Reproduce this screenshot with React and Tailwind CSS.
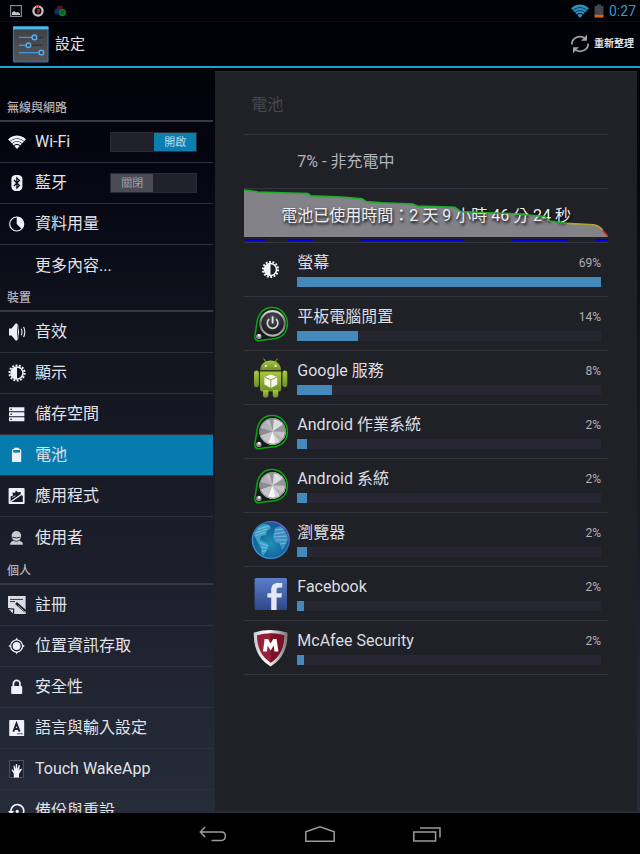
import React, { useState } from 'react';

// Small white icons for the settings list, all on an 18x18 grid
const ListIcon = ({ children }) => (
  <svg viewBox="0 0 18 18" className="w-[18px] h-[18px] shrink-0 text-[#f0f0fa]" fill="currentColor" aria-hidden="true">
    {children}
  </svg>
);

const WifiArcs = ({ id }) => (
  <>
    <clipPath id={id}>
      <path d="M9 16 L0 6.2 Q9 -2 18 6.2 Z" />
    </clipPath>
    <g clipPath={`url(#${id})`}>
      <circle cx="9" cy="15.4" r="3.4" />
      <circle cx="9" cy="15.4" r="5.6" fill="none" stroke="currentColor" strokeWidth="2.3" />
      <circle cx="9" cy="15.4" r="8.5" fill="none" stroke="currentColor" strokeWidth="2.5" />
      <circle cx="9" cy="15.4" r="11.5" fill="none" stroke="currentColor" strokeWidth="2.6" />
    </g>
  </>
);

const WifiIcon = () => (
  <ListIcon>
    <WifiArcs id="wifi-list" />
  </ListIcon>
);

const BluetoothIcon = () => (
  <ListIcon>
    <rect x="3.4" y="1" width="11" height="16" rx="4.2" />
    <path d="M6 6 L11.4 11.6 L8.9 14 V4 L11.4 6.4 L6 12" fill="none" stroke="#0a0b14" strokeWidth="1.3" />
  </ListIcon>
);

const DataUsageIcon = () => (
  <ListIcon>
    <circle cx="8.7" cy="9" r="7" fill="none" stroke="currentColor" strokeWidth="1.2" />
    <path d="M8.7 9 V1.8 A7.2 7.2 0 0 1 13.8 14.1 Z" />
  </ListIcon>
);

const SoundIcon = () => (
  <ListIcon>
    <path d="M1 5.4 H3.6 L7.6 0.4 H9.2 V17.6 H7.6 L3.6 12.6 H1 Z" />
    <path d="M9.6 1.2 Q11.6 9 9.6 16.8" fill="none" stroke="currentColor" strokeWidth="0.8" />
    <path d="M10 7.2 Q12.2 9 10 11 Z" />
    <path d="M13.2 5.8 Q14.8 9 13.2 12.2 M15.6 4 Q18 9 15.6 14" fill="none" stroke="currentColor" strokeWidth="1.1" />
  </ListIcon>
);

const DisplayShape = ({ hole }) => (
  <>
    <circle cx="9" cy="9" r="6.8" />
    <circle cx="9" cy="9" r="7.6" fill="none" stroke="currentColor" strokeWidth="2" strokeDasharray="1.9 1.51" />
    <path d="M9 3.8 A5.2 5.2 0 0 1 9 14.2 Z" fill={hole} />
  </>
);

const DisplayIcon = () => (
  <ListIcon>
    <DisplayShape hole="#12131d" />
  </ListIcon>
);

const StorageIcon = () => (
  <ListIcon>
    {[2.2, 7.2, 12.2].map((y) => (
      <g key={y}>
        <rect x="1" y={y} width="15.4" height="4.1" rx="0.4" />
        <rect x="2.4" y={y + 1.5} width="1.5" height="1.2" fill="#14151f" />
      </g>
    ))}
  </ListIcon>
);

const BatteryIcon = () => (
  <ListIcon>
    <path d="M4 4.2 Q4 3.4 5 3.2 L6.2 2.8 V1.8 H11 V2.8 L12.2 3.2 Q13.2 3.4 13.2 4.2 V15.4 Q13.2 16 12.6 16 H4.6 Q4 16 4 15.4 Z" />
    <rect x="5.2" y="4" width="6.8" height="2.6" fill="#0b7fae" />
  </ListIcon>
);

const AppsIcon = () => (
  <ListIcon>
    <rect x="0.6" y="1" width="16" height="16" rx="0.8" />
    <path d="M2.6 15 V9.4 L5 8.4 L4.4 5.6 L6.8 6 L8 3.4 L10 5.2 L12.8 5 L12.6 7.4 L14.8 9 V15 Z" fill="#181a26" />
    <path d="M2.6 14.8 L14 7" stroke="currentColor" strokeWidth="1.3" />
    <path d="M4 10.4 L7.6 8.8" stroke="currentColor" strokeWidth="0.7" />
  </ListIcon>
);

const UserIcon = () => (
  <ListIcon>
    <g fill="#c9cad2">
      <ellipse cx="8.4" cy="7" rx="4.8" ry="5" />
      <path d="M5.6 11.4 Q8.4 13.8 11.2 11.4 L14 13 Q15 14 15 15.8 H2 Q2 14 3 13 Z" />
    </g>
    <path d="M4.4 8.2 Q8.4 9.6 12.4 8.2" stroke="#1a1c28" strokeWidth="0.9" fill="none" />
  </ListIcon>
);

const RegisterIcon = () => (
  <ListIcon>
    <path d="M0 0 H17.6 V18 H5.6 L0 12.6 Z" fill="#dcdce4" />
    <path d="M0 12.6 L5.6 13 L5.6 18" fill="none" stroke="#1c202b" strokeWidth="1.2" />
    <path d="M2 3.4 H15 M2 5.6 H7" stroke="#1c202b" strokeWidth="0.9" />
    <path d="M8 7 L17.4 15.4" stroke="#1c202b" strokeWidth="2.8" />
    <path d="M10.2 9.6 L17.4 16.4" stroke="#dcdce4" strokeWidth="0.7" />
  </ListIcon>
);

const LocationIcon = () => (
  <ListIcon>
    <circle cx="8.6" cy="9" r="6" fill="none" stroke="currentColor" strokeWidth="1.2" />
    <circle cx="8.6" cy="9" r="3.9" />
    <path d="M7.2 3 L8.6 0.8 L10 3 Z M7.2 15 L8.6 17.2 L10 15 Z M2.6 7.6 L0.4 9 L2.6 10.4 Z M14.6 7.6 L16.8 9 L14.6 10.4 Z" />
  </ListIcon>
);

const LockIcon = () => (
  <ListIcon>
    <rect x="3.2" y="8" width="11" height="8" rx="0.8" />
    <path d="M5.4 8 V5.6 A3.3 3.3 0 0 1 12 5.6 V8" fill="none" stroke="currentColor" strokeWidth="1.7" />
  </ListIcon>
);

const LanguageIcon = () => (
  <ListIcon>
    <rect x="1.2" y="1" width="15" height="16" rx="0.8" />
    <path d="M5.4 12.6 L8.5 4.4 L11.6 12.6 M6.4 10 H10.6" fill="none" stroke="#212532" strokeWidth="1.9" />
    <path d="M9.4 14.8 H14.8" stroke="#212532" strokeWidth="1" strokeDasharray="1.4 0.5" />
  </ListIcon>
);

const HandIcon = () => (
  <ListIcon>
    <rect x="1.8" y="0.4" width="13.4" height="17.2" fill="#1b1f2a" stroke="#666a76" strokeWidth="0.7" />
    <path d="M5.8 17.6 V13.8 L3.4 10 L4 9.2 L6 11 L5.4 5.8 L6.4 5.4 L7.6 9 L7.8 4 H9 L9.4 9 L10.8 4.8 L11.8 5.2 L11.2 10 L13.2 8.4 L14 9.2 L11 14 V17.6 Z" />
  </ListIcon>
);

const BackupIcon = () => (
  <ListIcon>
    <path d="M3 9.8 A6.4 6.4 0 1 1 6.4 14.6" fill="none" stroke="currentColor" strokeWidth="1.7" />
    <path d="M0 9 H6.2 L3 12.8 Z" />
    <circle cx="9.2" cy="9.4" r="1.6" />
  </ListIcon>
);

// Larger icons for the battery usage list, all on a 40x40 grid
const AppIcon = ({ children }) => (
  <svg viewBox="0 0 40 40" className="w-10 h-10 shrink-0" aria-hidden="true">
    {children}
  </svg>
);

const ScreenAppIcon = () => (
  <AppIcon>
    <g transform="translate(10.5 10.5)" fill="#f4f4fc" color="#f4f4fc">
      <DisplayShape hole="#202127" />
    </g>
  </AppIcon>
);

const TEARDROP = 'M5.6 21 C6.4 11 11.6 3.6 21 3.6 C30 3.6 36.4 11 36.4 19.6 C36.4 28 31.4 33 25 34.4 L8.6 36.6 Q3.2 37 3.9 32 Z';

const IdleAppIcon = () => (
  <AppIcon>
    <defs>
      <radialGradient id="idle-face" cx="0.5" cy="0.3" r="0.8">
        <stop offset="0" stopColor="#4b4c50" />
        <stop offset="1" stopColor="#0b0c0e" />
      </radialGradient>
      <linearGradient id="idle-rim" x1="0" y1="0" x2="0" y2="1">
        <stop offset="0" stopColor="#d8d8dc" />
        <stop offset="0.5" stopColor="#6b6c70" />
        <stop offset="1" stopColor="#b0b0b4" />
      </linearGradient>
    </defs>
    <path d={TEARDROP} fill="#17181b" stroke="#06a80c" strokeWidth="1.5" />
    <circle cx="21.6" cy="19.4" r="12.2" fill="url(#idle-face)" stroke="url(#idle-rim)" strokeWidth="2.2" />
    <path d="M18.2 15 A5.3 5.3 0 1 0 25 15" fill="none" stroke="#cfcfd4" strokeWidth="1.7" />
    <path d="M21.6 12.4 V19.6" stroke="#e6e6ea" strokeWidth="1.8" />
    <circle cx="7.8" cy="32.4" r="2.7" fill="#8d8e92" />
    <circle cx="8.2" cy="31.4" r="1.3" fill="#efeff2" />
  </AppIcon>
);

const KnobAppIcon = ({ id }) => (
  <AppIcon>
    <defs>
      <clipPath id={id}>
        <circle cx="21.6" cy="19.4" r="13.2" />
      </clipPath>
    </defs>
    <path d={TEARDROP} fill="#17181b" stroke="#06a80c" strokeWidth="1.5" />
    <g clipPath={`url(#${id})`}>
      <rect x="8" y="6" width="28" height="28" fill="#b2b2b6" />
      <path d="M21.6 19.4 L11 3 H30 Z" fill="#c2c2c6" />
      <path d="M21.6 19.4 L17 3 H23 Z" fill="#95959a" />
      <path d="M21.6 19.4 L24 3 H36 V9 Z" fill="#dcdce0" />
      <path d="M21.6 19.4 L37 10 V20 Z" fill="#96969a" />
      <path d="M21.6 19.4 L37 20 V30 Z" fill="#c4c4c8" />
      <path d="M21.6 19.4 L6 15 V25 Z" fill="#8c8c90" />
      <path d="M21.6 19.4 L6 25 V34 H15 Z" fill="#c6c6ca" />
      <path d="M21.6 19.4 L15 36 H26 Z" fill="#f6f6f8" />
      <path d="M21.6 19.4 L26 36 H33 Z" fill="#d6d6da" />
    </g>
    <circle cx="21.6" cy="19.4" r="12.8" fill="none" stroke="#808085" strokeWidth="0.8" />
    <circle cx="7.8" cy="32.4" r="2.7" fill="#8d8e92" />
    <circle cx="8.2" cy="31.4" r="1.3" fill="#efeff2" />
  </AppIcon>
);

const AndroidAppIcon = () => (
  <AppIcon>
    <defs>
      <linearGradient id="robot" x1="0" y1="0" x2="0" y2="1">
        <stop offset="0" stopColor="#a8c83c" />
        <stop offset="1" stopColor="#6f8e26" />
      </linearGradient>
    </defs>
    <path d="M12.6 0.6 L15.4 4.6 M26.4 0.6 L23.6 4.6" stroke="#8fae33" strokeWidth="1" />
    <g fill="url(#robot)">
      <path d="M9.2 12.2 C9.2 6.2 13.6 2.4 19.6 2.4 C25.6 2.4 30 6.2 30 12.2 Z" />
      <path d="M9 13.4 H30.2 V31 Q30.2 33.6 27.6 33.6 H11.6 Q9 33.6 9 31 Z" />
      <rect x="3" y="12.6" width="4.9" height="16.6" rx="2.4" />
      <rect x="31.4" y="12.6" width="4.9" height="16.6" rx="2.4" />
      <path d="M12 32 H17.4 V37 Q17.4 39.6 14.7 39.6 Q12 39.6 12 37 Z M21.8 32 H27.2 V37 Q27.2 39.6 24.5 39.6 Q21.8 39.6 21.8 37 Z" />
    </g>
    <circle cx="14.8" cy="8" r="1.1" fill="#fff" />
    <circle cx="24.6" cy="8" r="1.1" fill="#fff" />
    <path d="M19.8 16.4 L26.2 19 V26.6 L19.8 30 L13.4 26.6 V19 Z" fill="#f7f8ef" />
    <path d="M13.4 19 L19.8 21.8 L26.2 19 M19.8 21.8 V30" fill="none" stroke="#8fa746" strokeWidth="1" />
  </AppIcon>
);

const GlobeAppIcon = () => (
  <AppIcon>
    <defs>
      <radialGradient id="ocean" cx="0.5" cy="0.6" r="0.6">
        <stop offset="0" stopColor="#1f8fb8" />
        <stop offset="0.6" stopColor="#176a9e" />
        <stop offset="1" stopColor="#1b5592" />
      </radialGradient>
      <linearGradient id="globe-edge" x1="0" y1="1" x2="1" y2="0">
        <stop offset="0" stopColor="#3aa5dc" />
        <stop offset="0.65" stopColor="#2b72b8" />
        <stop offset="1" stopColor="#9a58e0" />
      </linearGradient>
    </defs>
    <circle cx="19.8" cy="20" r="18.4" fill="url(#ocean)" stroke="url(#globe-edge)" strokeWidth="1.4" />
    <path d="M3 15 Q5 7 13 4 L18 5 L20 8 L16 11 L15 15 L10 16 L9 20 L14 22 L18 25 L16 30 L12 36 Q10 33 10 28 L7 23 Z" fill="#3da2c8" />
    <path d="M24 8 L30 6 Q36 12 37 19 L34 26 L31 30 L29 24 L24 22 L22 17 Z" fill="#3f8fc6" />
    <path d="M4 13 L16 9 M4 16 L14 12 M7 9 L18 6 M9 23 L17 26 M10 27 L16 28 M11 31 L15 31 M24 10 L32 9 M23 14 L34 12 M23 17 L36 16 M25 20 L36 20 M29 24 L35 23" stroke="#8fcbe2" strokeWidth="0.7" />
  </AppIcon>
);

const FacebookAppIcon = () => (
  <AppIcon>
    <defs>
      <linearGradient id="fb" x1="0" y1="0" x2="0" y2="1">
        <stop offset="0" stopColor="#5b7ec8" />
        <stop offset="1" stopColor="#2e478a" />
      </linearGradient>
    </defs>
    <rect x="3.6" y="4" width="32.4" height="32" rx="1.6" fill="url(#fb)" />
    <path d="M20.2 36 V23.6 H16.4 V19.2 H20.2 V16 C20.2 11.4 22.6 9 27 9 H31.2 V13.6 H28.4 C26.2 13.6 25.6 14.6 25.6 16.4 V19.2 H31 L30.4 23.6 H25.6 V36 Z" fill="#e4e8f4" />
  </AppIcon>
);

const McAfeeAppIcon = () => (
  <AppIcon>
    <defs>
      <linearGradient id="shield" x1="0" y1="0" x2="1" y2="0">
        <stop offset="0" stopColor="#c9c9cd" />
        <stop offset="0.4" stopColor="#ffffff" />
        <stop offset="1" stopColor="#77777c" />
      </linearGradient>
    </defs>
    <path d="M2.8 4.6 Q19.6 -0.4 36.4 4.6 Q37 15 33 24 Q29 33 19.6 38.4 Q10.2 33 6.2 24 Q2.2 15 2.8 4.6 Z" fill="url(#shield)" />
    <path d="M6 7.2 Q19.6 3.4 33.2 7.2 Q33.4 15.4 30.2 22.6 Q27 30 19.6 34.8 Q12.2 30 9 22.6 Q5.8 15.4 6 7.2 Z" fill="#98203a" />
    <path d="M19.6 5.4 Q27 5.4 33.2 7.2 Q33.4 15.4 30.2 22.6 Q27 30 19.6 34.8 Z" fill="#7a1226" />
    <path d="M12 23.6 L13.6 11 H17 L19.6 15.4 L22.2 11 H25.6 L27.4 23.6 H23.4 L22.8 17.6 L19.6 22.4 L16.6 17.6 L16 23.6 Z" fill="#fff" />
  </AppIcon>
);

const sections = [
  {
    title: '無線與網路',
    className: 'h-[54px]',
    items: [
      { label: 'Wi-Fi', icon: <WifiIcon />, toggle: true, on: true },
      { label: '藍牙', icon: <BluetoothIcon />, toggle: true, on: false },
      { label: '資料用量', icon: <DataUsageIcon /> },
      { label: '更多內容...', icon: null },
    ],
  },
  {
    title: '裝置',
    className: 'h-[26px]',
    items: [
      { label: '音效', icon: <SoundIcon /> },
      { label: '顯示', icon: <DisplayIcon /> },
      { label: '儲存空間', icon: <StorageIcon /> },
      { label: '電池', icon: <BatteryIcon /> },
      { label: '應用程式', icon: <AppsIcon /> },
      { label: '使用者', icon: <UserIcon /> },
    ],
  },
  {
    title: '個人',
    className: 'h-[27px]',
    items: [
      { label: '註冊', icon: <RegisterIcon /> },
      { label: '位置資訊存取', icon: <LocationIcon /> },
      { label: '安全性', icon: <LockIcon /> },
      { label: '語言與輸入設定', icon: <LanguageIcon /> },
      { label: 'Touch WakeApp', icon: <HandIcon /> },
      { label: '備份與重設', icon: <BackupIcon /> },
    ],
  },
];

// percent is the label, bar is relative to the top consumer
const usage = [
  { name: '螢幕', percent: 69, bar: 100, icon: <ScreenAppIcon /> },
  { name: '平板電腦閒置', percent: 14, bar: 20, icon: <IdleAppIcon /> },
  { name: 'Google 服務', percent: 8, bar: 11.3, icon: <AndroidAppIcon /> },
  { name: 'Android 作業系統', percent: 2, bar: 3.2, icon: <KnobAppIcon id="knob-os" /> },
  { name: 'Android 系統', percent: 2, bar: 3.2, icon: <KnobAppIcon id="knob-system" /> },
  { name: '瀏覽器', percent: 2, bar: 3.2, icon: <GlobeAppIcon /> },
  { name: 'Facebook', percent: 2, bar: 2.3, icon: <FacebookAppIcon /> },
  { name: 'McAfee Security', percent: 2, bar: 2.3, icon: <McAfeeAppIcon /> },
];

const Toggle = ({ label, initial }) => {
  const [on, setOn] = useState(initial);

  return (
    <button
      type="button"
      role="switch"
      aria-checked={on}
      aria-label={label}
      onClick={() => setOn(!on)}
      className={`flex w-[87px] h-5 shrink-0 bg-[#20212a] border border-[#292a33] ${on ? 'justify-end' : 'justify-start'}`}
    >
      <span
        className={`flex items-center justify-center w-[42px] h-full text-[11px] leading-none ${
          on ? 'bg-[#0a7fb0] text-[#b9d9e8]' : 'bg-[#4b4b55] text-[#a2a2ab]'
        }`}
      >
        {on ? '開啟' : '關閉'}
      </span>
    </button>
  );
};

const StatusBar = () => (
  <div className="flex items-center justify-between h-[22px] shrink-0 pl-[10px] pr-1 border-b border-[#0e0f16]">
    <div className="flex items-center gap-[10px]">
      <svg viewBox="0 0 12 12" className="w-3 h-3" aria-hidden="true">
        <rect x="0.6" y="0.6" width="10.8" height="10.8" fill="none" stroke="#86878d" strokeWidth="1.2" />
        <path d="M2 10 V7.4 L4.2 6 L6 7.6 L8 7 L10 8.4 V10 Z" fill="#c4c5ca" />
      </svg>
      <svg viewBox="0 0 12 12" className="w-3 h-3" aria-hidden="true">
        <circle cx="6" cy="6" r="4.6" fill="#12090c" stroke="#c8c8cc" strokeWidth="2.2" />
        <path d="M4.8 0.4 V3 M6.6 0.4 V2.4" stroke="#d8202c" strokeWidth="1.2" />
        <path d="M4.8 4.6 H7.2 V6.4 H6 V8.4" fill="none" stroke="#d01c28" strokeWidth="1.3" />
      </svg>
      <svg viewBox="0 0 12 12" className="w-3 h-3" aria-hidden="true">
        <circle cx="5.8" cy="3.4" r="3" fill="#5a1420" />
        <circle cx="3.4" cy="6.6" r="3.2" fill="#142c5e" />
        <circle cx="8.4" cy="7.6" r="3.6" fill="#0f7a32" />
        <path d="M6.6 6.8 Q8.6 5.8 10.4 7 M6.8 8.6 Q8.4 7.8 9.8 8.8" fill="none" stroke="#063d16" strokeWidth="0.8" />
      </svg>
    </div>
    <div className="flex items-center gap-1">
      <svg viewBox="0 0 18 18" className="w-[18px] h-[18px] text-[#2b90bd]" fill="currentColor" aria-hidden="true">
        <WifiArcs id="wifi-status" />
      </svg>
      <svg viewBox="0 0 12 14" className="w-3 h-[14px]" aria-hidden="true">
        <path d="M2 2 H4 V0.6 H8 V2 H10.4 V13.4 H1.6 V2 Z" fill="#44454d" />
        <rect x="1.6" y="10.8" width="8.8" height="2.6" fill="#e0600f" />
      </svg>
      <span className="text-[14px] leading-none text-[#2f9bcb]">0:27</span>
    </div>
  </div>
);

const Header = () => (
  <header className="flex items-center justify-between h-[46px] shrink-0 pl-3 pr-[6px] border-b-2 border-[#1f9fd0]">
    <div className="flex items-center gap-[6px]">
      <svg viewBox="0 0 37 37" className="w-[37px] h-[37px]" aria-hidden="true">
        <defs>
          <linearGradient id="settings-bg" x1="0" y1="0" x2="0" y2="1">
            <stop offset="0" stopColor="#3e4046" />
            <stop offset="1" stopColor="#54565c" />
          </linearGradient>
        </defs>
        <rect x="1.5" y="1" width="34.5" height="35" rx="1" fill="url(#settings-bg)" stroke="#2a78b4" strokeWidth="1.2" />
        <rect x="1" y="0.4" width="35.5" height="3" fill="#4db9ee" />
        <path d="M7 11.4 H31 M7 19.2 H31" stroke="#25323f" strokeWidth="1.3" />
        <path d="M7 11.4 H20 M7 19.2 H14 M7 26.6 H27" stroke="#3b9be0" strokeWidth="1.4" />
        <g fill="#3c4450" stroke="#55aceb" strokeWidth="1.5">
          <circle cx="22.4" cy="11.4" r="2.3" />
          <circle cx="16.4" cy="19.2" r="2.3" />
          <circle cx="29.4" cy="26.6" r="2.3" />
        </g>
      </svg>
      <h1 className="text-[15px] leading-none text-[#e4e4ea]">設定</h1>
    </div>
    <button type="button" className="flex items-center gap-1 text-[10px] leading-none font-bold text-[#e0e0e6]">
      <svg viewBox="0 0 20 20" className="w-5 h-5" aria-hidden="true">
        <g fill="none" stroke="#9fa0a6" strokeWidth="1.8">
          <path d="M1.8 10.4 C1.8 4.4 8.4 0.6 14.4 4" />
          <path d="M18.2 9.4 C18.2 15.6 11.4 19.4 5.6 16" />
        </g>
        <path d="M17 0.6 V6.8 H11 L13.4 4.6 Z M3 19.4 V13.2 H9 L6.6 15.4 Z" fill="#9fa0a6" />
      </svg>
      重新整理
    </button>
  </header>
);

const Sidebar = ({ selected, onSelect }) => (
  <nav className="w-1/3 shrink-0 overflow-y-auto [scrollbar-width:none]">
    {sections.map((section) => (
      <section key={section.title}>
        <h2
          className={`flex items-end pl-[7px] pb-1 text-xs leading-4 font-medium text-[#b4b4bd] border-b-2 border-[#373942] ${section.className}`}
        >
          {section.title}
        </h2>
        <ul>
          {section.items.map((item, index) => {
            const active = item.label === selected;
            const last = index === section.items.length - 1;
            return (
              <li
                key={item.label}
                className={`flex items-center h-[41px] pr-4 ${last ? '' : 'border-b border-[#2e313b]'} ${active ? 'bg-[#057cad]' : ''}`}
              >
                <a
                  href="#"
                  onClick={(e) => {
                    e.preventDefault();
                    onSelect(item.label);
                  }}
                  className="flex flex-1 items-center gap-[9px] h-full pl-2 text-base leading-none whitespace-nowrap text-[#e2e2ea]"
                >
                  {item.icon || <span className="w-[18px]" />}
                  {item.label}
                </a>
                {item.toggle && <Toggle label={item.label} initial={item.on} />}
              </li>
            );
          })}
        </ul>
      </section>
    ))}
  </nav>
);

const BatteryChart = () => (
  <div className="grid h-[54px] border-b border-[#33343c]">
    <svg viewBox="0 0 364 54" preserveAspectRatio="none" className="col-start-1 row-start-1 w-full h-full" aria-hidden="true">
      <path
        d="M0 1 L14 3 L64 4.7 L67 7 L98 8.3 L118 10 L122 12.7 L138 14 L169 15.3 L173 17.3 L211 18.7 L217 23 L236 24 L266 25 L301 28 L306 32.7 L323 35 L350 36.4 Q356 37.4 359 42 L364 48 V49 H0 Z"
        fill="#828288"
      />
      <path d="M1 52 H22 M44 52 H69 M117 52 H220 M268 52 H324 M351 52 H364" stroke="#0000dc" strokeWidth="2" />
    </svg>
    <p className="col-start-1 row-start-1 self-center text-center text-base leading-none text-[#eeeef2] [text-shadow:1px_2px_3px_#000000]">
      電池已使用時間：2 天 9 小時 46 分 24 秒
    </p>
    <svg viewBox="0 0 364 54" preserveAspectRatio="none" className="relative col-start-1 row-start-1 w-full h-full" fill="none" strokeWidth="1.6" aria-hidden="true">
      <path
        d="M0 1 L14 3 L64 4.7 L67 7 L98 8.3 L118 10 L122 12.7 L138 14 L169 15.3 L173 17.3 L211 18.7 L217 23 L236 24 L266 25 L301 28 L306 32.7 L323 35"
        stroke="#1fae28"
      />
      <path d="M323 35 L350 36.4 Q356 37.4 359 42" stroke="#b0a52c" />
      <path d="M359 42 L364 48" stroke="#d8241c" />
    </svg>
  </div>
);

const UsageRow = ({ item }) => (
  <li className="flex items-center gap-[6px] h-[54px] px-[7px] border-b border-[#33343c]">
    {item.icon}
    <div className="flex-1 pb-0.5">
      <div className="flex items-center justify-between h-6 mb-0.5">
        <span className="text-base leading-none text-[#dcdce2]">{item.name}</span>
        <span className="text-xs leading-none text-[#b0b0b6]">{item.percent}%</span>
      </div>
      <div className="h-[10px] bg-[#272632]">
        <div className="h-full bg-[#4389bc]" style={{ width: `${item.bar}%` }} />
      </div>
    </div>
  </li>
);

const BatteryPanel = () => (
  <main className="flex-1 mt-[3px] mr-[3px] mb-[2px] ml-[2px] px-[29px] bg-[#202127] border-t border-[#2a2b31]">
    <h2 className="flex items-center h-[63px] pl-[7px] pt-1 text-base leading-none text-[#47484f] border-b border-[#33343c]">電池</h2>
    <p className="flex items-center h-[54px] pl-[53px] text-base leading-none text-[#b4b4ba] border-b border-[#33343c]">
      7% - 非充電中
    </p>
    <BatteryChart />
    <ul>
      {usage.map((item) => (
        <UsageRow key={item.name} item={item} />
      ))}
    </ul>
  </main>
);

const NavBar = () => (
  <div className="flex items-center justify-center h-[41px] shrink-0 bg-black">
    <button type="button" aria-label="Back" className="flex justify-center w-[107px]">
      <svg viewBox="0 0 28 16" className="w-7 h-4" fill="none" stroke="#9c9c9c" strokeWidth="1.5" aria-hidden="true">
        <path d="M6 1 L1.4 6 L6 11 M1.6 6 H22.4 Q26.4 6 26.4 10 Q26.4 14.4 22.4 14.4 H12.6" />
      </svg>
    </button>
    <button type="button" aria-label="Home" className="flex justify-center w-[107px]">
      <svg viewBox="0 0 30 16" className="w-[30px] h-4" fill="none" stroke="#9c9c9c" strokeWidth="1.5" aria-hidden="true">
        <path d="M0.8 15.2 V5.8 L15 0.9 L29.2 5.8 V15.2 Z" />
      </svg>
    </button>
    <button type="button" aria-label="Recent apps" className="flex justify-center w-[107px]">
      <svg viewBox="0 0 28 16" className="w-7 h-4" fill="none" stroke="#9c9c9c" strokeWidth="1.5" aria-hidden="true">
        <path d="M0.8 6 H22.6 V15 H0.8 Z" />
        <path d="M7 2 H27 V11.4" />
      </svg>
    </button>
  </div>
);

const App = () => {
  const [selected, setSelected] = useState('電池');

  return (
    <div className="flex flex-col h-screen overflow-hidden bg-linear-to-b from-[#010108] from-5% via-[#12141e] via-40% to-[#282e3c] font-[Roboto,'Noto_Sans_CJK_TC',sans-serif]">
      <StatusBar />
      <Header />
      <div className="flex flex-1 min-h-0">
        <Sidebar selected={selected} onSelect={setSelected} />
        <BatteryPanel />
      </div>
      <NavBar />
    </div>
  );
};

export default App;
